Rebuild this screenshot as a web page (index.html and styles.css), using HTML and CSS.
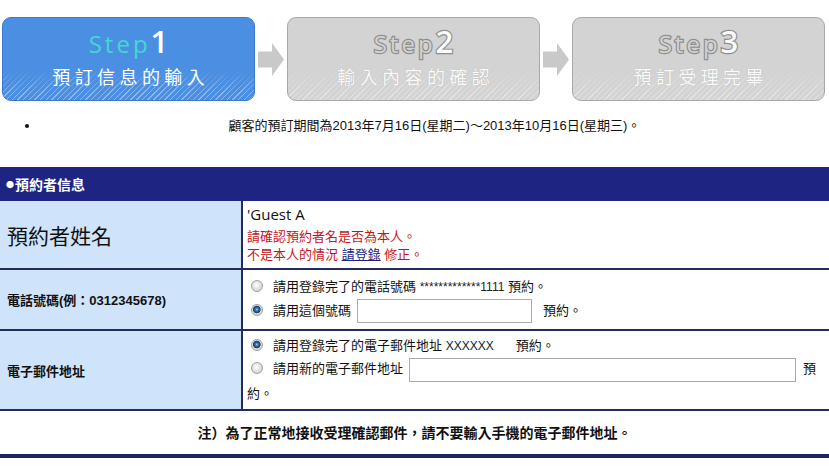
FILE: index.html
```html
<!DOCTYPE html>
<html lang="zh-Hant">
<head>
<meta charset="utf-8">
<title>預約者信息</title>
<link rel="stylesheet" href="styles.css">
</head>
<body>
<div class="steps">
  <div class="step step-on">
    <div class="step-title"><span class="st-word">Step</span><span class="st-num">1</span></div>
    <div class="step-name">預訂信息的輸入</div>
  </div>
  <svg class="arrow" width="26" height="33" viewBox="0 0 26 33"><path d="M0 8.5H14V0L26 16.5L14 33V24.5H0Z" fill="#c9c9c9"/></svg>
  <div class="step step-off">
    <div class="step-title"><span class="st-word">Step</span><span class="st-num">2</span></div>
    <div class="step-name">輸入內容的確認</div>
  </div>
  <svg class="arrow" width="26" height="33" viewBox="0 0 26 33"><path d="M0 8.5H14V0L26 16.5L14 33V24.5H0Z" fill="#c9c9c9"/></svg>
  <div class="step step-off">
    <div class="step-title"><span class="st-word">Step</span><span class="st-num">3</span></div>
    <div class="step-name">預訂受理完畢</div>
  </div>
</div>

<ul class="period">
  <li>顧客的預訂期間為2013年7月16日(星期二)～2013年10月16日(星期三)。</li>
</ul>

<div class="info">
  <div class="info-head"><span class="dot">●</span>預約者信息</div>
  <div class="row row-name">
    <div class="label label-big">預約者姓名</div>
    <div class="val val-name">
      <div class="guest">'Guest A</div>
      <div class="warn">請確認預約者名是否為本人。</div>
      <div class="warn">不是本人的情況 <a href="#" class="link">請登錄</a> 修正。</div>
    </div>
  </div>
  <div class="row row-tel">
    <div class="label">電話號碼(例：0312345678)</div>
    <div class="val">
      <div class="line"><input type="radio" name="tel" class="radio">請用登錄完了的電話號碼 <span class="latin">*************1111</span> 預約。</div>
      <div class="line line-field"><input type="radio" name="tel" class="radio" checked>請用這個號碼<input type="text" class="field field-tel">預約。</div>
    </div>
  </div>
  <div class="row row-mail">
    <div class="label">電子郵件地址</div>
    <div class="val">
      <div class="line"><input type="radio" name="mail" class="radio" checked>請用登錄完了的電子郵件地址 <span class="latin">XXXXXX</span><span class="gap">預約。</span></div>
      <div class="line line-wrap"><input type="radio" name="mail" class="radio">請用新的電子郵件地址<input type="text" class="field field-mail">預<br>約。</div>
    </div>
  </div>
  <div class="row-note">注）為了正常地接收受理確認郵件，請不要輸入手機的電子郵件地址。</div>
</div>
</body>
</html>
```
FILE: styles.css
```css
html, body {
  margin: 0;
  padding: 0;
  background: #ffffff;
}
body {
  font-family: "Liberation Sans", "Noto Sans CJK TC", sans-serif;
  color: #111111;
  width: 829px;
}

/* ---------- steps ---------- */
.steps {
  display: flex;
  align-items: center;
  gap: 3px;
  padding: 17px 0 0 2px;
}
.step {
  position: relative;
  width: 253px;
  height: 84px;
  box-sizing: border-box;
  border-radius: 9px;
  overflow: hidden;
  display: flex;
  flex-direction: column;
  align-items: center;
}
.step::after {
  content: "";
  position: absolute;
  left: 0;
  right: 0;
  bottom: 0;
  height: 30px;
  background: repeating-linear-gradient(135deg, transparent 0 3px, rgba(255,255,255,0.38) 3px 4px);
  -webkit-mask-image: linear-gradient(to bottom, transparent, #000 80%);
  mask-image: linear-gradient(to bottom, transparent, #000 80%);
}
.step-on {
  background: #4b8fe2;
  border: 1px solid #3c79cc;
}
.step-off {
  background: #d3d3d3;
  border: 1px solid #a9a9a9;
}
.step-title {
  margin-top: 5px;
  height: 36px;
  line-height: 36px;
  font-family: "Open Sans", "Liberation Sans", sans-serif;
  white-space: nowrap;
}
.st-word {
  font-size: 24px;
  letter-spacing: 3px;
}
.st-num {
  font-size: 31px;
  font-weight: 600;
}
.step-on .st-word { color: #3fd9cf; }
.step-on .st-num { color: #ffffff; }
.step-off .st-word,
.step-off .st-num {
  -webkit-text-stroke: 2.4px #8e8e8e;
  paint-order: stroke fill;
}
.step-off .st-word { color: #d2d2d2; }
.step-off .st-num { color: #fbfbfb; }
.step-name {
  margin-top: 5px;
  font-family: "Noto Sans CJK TC", sans-serif;
  font-size: 18px;
  line-height: 24px;
  letter-spacing: 4.4px;
  padding-left: 4.4px;
  color: #ffffff;
  white-space: nowrap;
}
.step-off .step-name {
  color: #fafafa;
  text-shadow: 0 0 1px #a8a8a8;
}
.arrow {
  display: block;
  flex: none;
}

/* ---------- period ---------- */
.period {
  margin: 16px 0 0 0;
  padding: 0 0 0 40px;
  list-style: disc;
}
.period li {
  text-align: center;
  font-size: 13px;
  line-height: 18px;
}

/* ---------- info table ---------- */
.info {
  margin-top: 32px;
  border-bottom: 4px solid #1f2460;
}
.info-head {
  height: 34px;
  line-height: 34px;
  background: #1e2481;
  color: #ffffff;
  font-family: "Noto Sans CJK TC", sans-serif;
  font-weight: 700;
  font-size: 14px;
  padding-left: 6px;
}
.dot {
  font-size: 8px;
  vertical-align: 2px;
  margin-right: 1px;
}
.row {
  display: grid;
  grid-template-columns: 243px 1fr;
  box-sizing: border-box;
  border-bottom: 2px solid #232a5c;
}
.row-name { height: 69px; }
.row-tel { height: 61px; }
.row-mail { height: 80px; }
.label {
  box-sizing: border-box;
  background: #cfe3fa;
  border-right: 2px solid #232a5c;
  display: flex;
  align-items: center;
  padding-left: 7px;
  font-family: "Liberation Sans", "Noto Sans CJK TC", sans-serif;
  font-size: 13px;
  font-weight: 700;
  color: #111111;
}
.label-big {
  font-family: "Noto Sans CJK TC", sans-serif;
  font-size: 21px;
  font-weight: 400;
}
.val {
  display: flex;
  flex-direction: column;
  justify-content: center;
  padding: 0 4px;
  font-size: 13px;
  line-height: 22px;
  color: #111111;
}
.val-name {
  justify-content: flex-start;
  padding-top: 3px;
}
.guest {
  font-family: "Open Sans", "Liberation Sans", sans-serif;
  font-size: 15px;
  line-height: 20px;
  margin-bottom: 4px;
}
.warn {
  color: #c3161c;
  line-height: 18px;
}
.link {
  color: #1a2380;
  text-decoration: underline;
}
.latin {
  font-family: "Liberation Sans", sans-serif;
  font-size: 12px;
  color: #222222;
}
.gap {
  margin-left: 22px;
}
.radio {
  -webkit-appearance: none;
  appearance: none;
  width: 12px;
  height: 12px;
  box-sizing: border-box;
  border-radius: 50%;
  border: 1px solid #a2a2a2;
  background: radial-gradient(circle at 45% 40%, #ffffff 0, #e4e4e4 45%, #c4c4c4 100%);
  margin: 0 10px 0 4px;
  vertical-align: -1px;
}
.radio:checked {
  background: radial-gradient(circle at 48% 45%, #a8d4f2 0, #3673a6 1.5px, #1c416a 3.4px, #dcdcdc 4.2px, #c6c6c6 100%);
}
.field {
  box-sizing: border-box;
  height: 24px;
  border: 1px solid #ababab;
  background: #ffffff;
  vertical-align: middle;
  padding: 0;
}
.field-tel {
  width: 175px;
  margin: 0 11px 0 6px;
}
.field-mail {
  width: 387px;
  margin: 0 7px 0 6px;
}
.line-field {
  line-height: 25px;
}
.line-wrap {
  line-height: 23px;
}
.row-note {
  height: 43px;
  line-height: 43px;
  text-align: center;
  font-family: "Noto Sans CJK TC", sans-serif;
  font-weight: 700;
  font-size: 14px;
  color: #111111;
}
```
